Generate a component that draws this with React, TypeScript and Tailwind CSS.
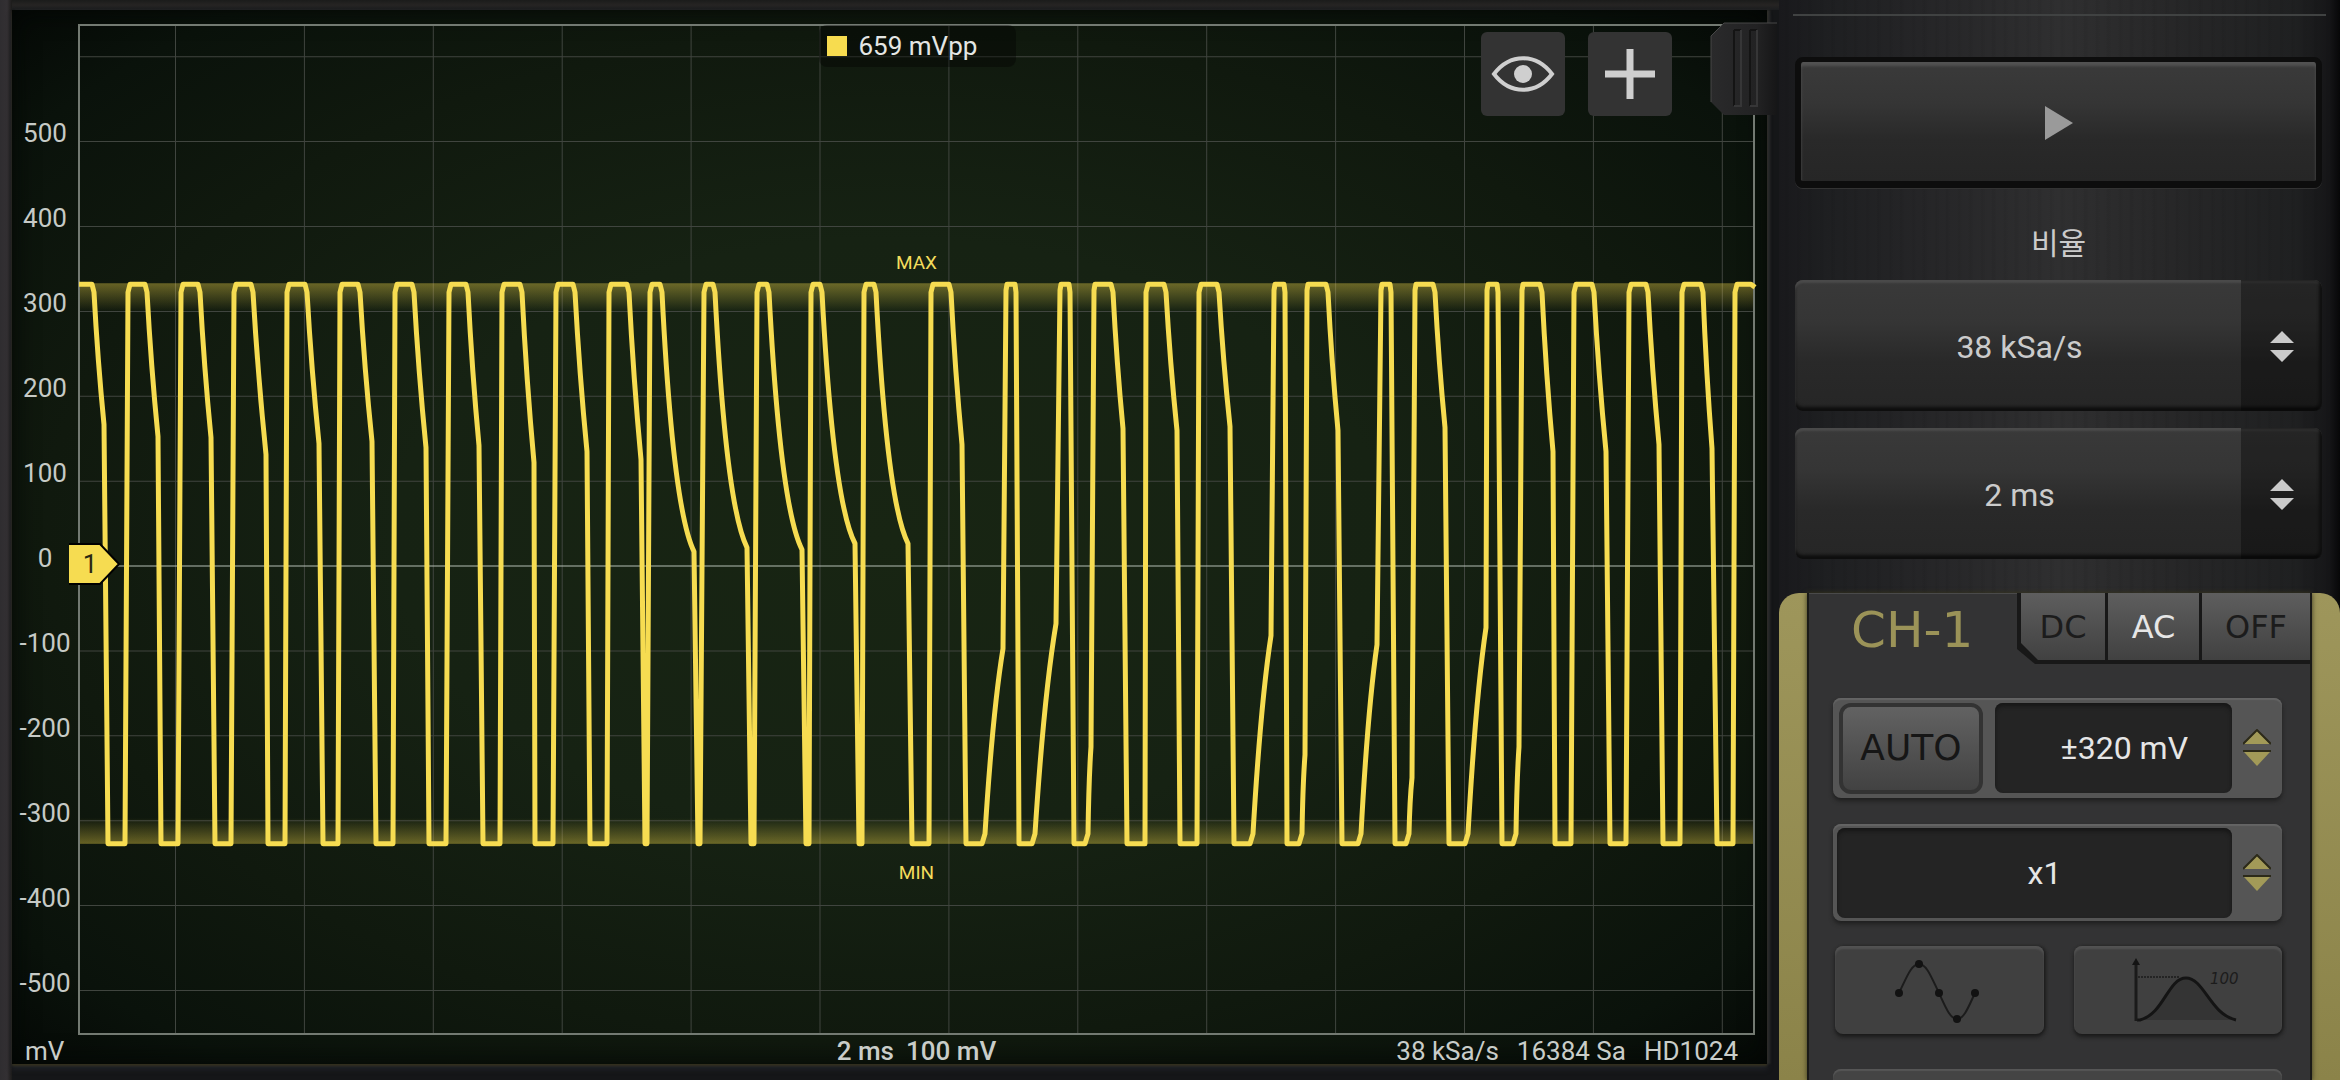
import type { ReactNode } from "react";

const TOP = 284;
const BOTTOM = 843;
const ZERO = 565.5;
const DIVISION = 84.8;

type Pulse = {
  /** x where the trace leaves the lower rail and where it reaches the upper one */
  rise?: [number, number];
  /** bend of a slow rising edge */
  riseKnee?: [number, number];
  /** x where the trace leaves the upper rail and where it reaches the lower one */
  fall?: [number, number];
  /** bend of a slow falling edge */
  fallKnee?: [number, number];
};

const pulses: Pulse[] = [
  { fall: [93, 108], fallKnee: [104, 424] },
  { rise: [125, 129], fall: [146, 161], fallKnee: [158, 436] },
  { rise: [178, 182], fall: [199, 215], fallKnee: [211, 437] },
  { rise: [231, 235], fall: [252, 268], fallKnee: [266, 454] },
  { rise: [285, 288], fall: [306, 323], fallKnee: [319, 443] },
  { rise: [338, 341], fall: [359, 376], fallKnee: [372, 441] },
  { rise: [393, 396], fall: [413, 429], fallKnee: [426, 447] },
  { rise: [446, 450], fall: [467, 483], fallKnee: [479, 445] },
  { rise: [500, 503], fall: [521, 535], fallKnee: [534, 462] },
  { rise: [553, 557], fall: [574, 590], fallKnee: [587, 451] },
  { rise: [607, 610], fall: [628, 645], fallKnee: [641, 459] },
  { rise: [647, 651], fall: [661, 698], fallKnee: [694, 551] },
  { rise: [700, 705], fall: [714, 751], fallKnee: [747, 547] },
  { rise: [754, 758], fall: [768, 806], fallKnee: [802, 549] },
  { rise: [809, 812], fall: [821, 859], fallKnee: [855, 543] },
  { rise: [862, 865], fall: [875, 912], fallKnee: [908, 543] },
  { rise: [929, 932], fall: [950, 966], fallKnee: [962, 444] },
  { rise: [984, 1006], riseKnee: [1003, 648], fall: [1016, 1019] },
  { rise: [1034, 1060], riseKnee: [1056, 623], fall: [1070, 1074] },
  { rise: [1087, 1094], riseKnee: [1091, 746], fall: [1112, 1127], fallKnee: [1123, 428] },
  { rise: [1145, 1147], fall: [1165, 1180], fallKnee: [1177, 430] },
  { rise: [1197, 1200], fall: [1218, 1234], fallKnee: [1230, 426] },
  { rise: [1252, 1274], riseKnee: [1271, 635], fall: [1285, 1287] },
  { rise: [1301, 1307], riseKnee: [1305, 754], fall: [1327, 1342], fallKnee: [1338, 430] },
  { rise: [1360, 1381], riseKnee: [1377, 644], fall: [1391, 1395] },
  { rise: [1408, 1415], riseKnee: [1412, 777], fall: [1434, 1449], fallKnee: [1445, 427] },
  { rise: [1467, 1487], riseKnee: [1486, 627], fall: [1498, 1502] },
  { rise: [1515, 1522], riseKnee: [1519, 746], fall: [1541, 1555], fallKnee: [1553, 451] },
  { rise: [1571, 1575], fall: [1593, 1610], fallKnee: [1606, 451] },
  { rise: [1626, 1630], fall: [1647, 1663], fallKnee: [1659, 444] },
  { rise: [1680, 1683], fall: [1702, 1717], fallKnee: [1712, 448] },
  { rise: [1733, 1736] },
];

function tracePath(): string {
  const d: string[] = [`M79 ${TOP}`];
  for (const p of pulses) {
    if (p.rise) {
      const [x0, x1] = p.rise;
      if (p.riseKnee) {
        const [kx, ky] = p.riseKnee;
        const dx = kx - x0;
        d.push(`L${x0 - 2} ${BOTTOM} L${x0 + 1} ${BOTTOM - 10}`);
        d.push(`Q${x0 + dx * 0.45} ${ky + (BOTTOM - ky) * 0.33} ${kx} ${ky} L${x1} ${TOP + 6}`);
      } else {
        d.push(`L${x0} ${BOTTOM} L${x1 - 1} ${TOP + 8}`);
      }
      d.push(`L${x1 + 1} ${TOP}`);
    }
    if (p.fall) {
      const [x0, x1] = p.fall;
      d.push(`L${x0 - 1} ${TOP}`);
      if (p.fallKnee) {
        const [kx, ky] = p.fallKnee;
        const dx = kx - x0;
        const bend = dx > 20 ? [0.36, 0.84] : [0.42, 0.54];
        d.push(`L${x0 + 1} ${TOP + 8}`);
        d.push(`Q${x0 + dx * bend[0]} ${TOP + (ky - TOP) * bend[1]} ${kx} ${ky}`);
      } else {
        d.push(`L${x0} ${TOP + 8}`);
      }
      d.push(`L${x1} ${BOTTOM}`);
    }
  }
  d.push(`L1751 ${TOP} L1755 ${TOP + 3}`);
  return d.join(" ");
}

const levels = [500, 400, 300, 200, 100, 0, -100, -200, -300, -400, -500];

function Plot() {
  return (
    <svg
      viewBox="78 24 1677 1010"
      preserveAspectRatio="none"
      className="absolute inset-0 h-full w-full overflow-visible"
      aria-hidden="true"
    >
      <defs>
        <linearGradient id="maxBand" x1="0" y1="0" x2="0" y2="1">
          <stop offset="0" stopColor="#f7dc4a" stopOpacity="0.38" />
          <stop offset="1" stopColor="#f7dc4a" stopOpacity="0" />
        </linearGradient>
        <linearGradient id="minBand" x1="0" y1="1" x2="0" y2="0">
          <stop offset="0" stopColor="#f7dc4a" stopOpacity="0.38" />
          <stop offset="1" stopColor="#f7dc4a" stopOpacity="0" />
        </linearGradient>
      </defs>
      <g stroke="#40453f" strokeWidth="1">
        {Array.from({ length: 13 }, (_, i) => 175.5 + i * 128.9).map((x) => (
          <line key={x} x1={x} x2={x} y1="25" y2="1033" />
        ))}
        {[6, ...levels.map((v) => v / 100)]
          .filter((n) => n !== 0)
          .map((n) => (
            <line key={n} x1="79" x2="1754" y1={ZERO - n * DIVISION} y2={ZERO - n * DIVISION} />
          ))}
      </g>
      <rect x="79" y="283" width="1675" height="28" fill="url(#maxBand)" />
      <rect x="79" y="817" width="1675" height="26" fill="url(#minBand)" />
      <line x1="79" x2="1754" y1={ZERO} y2={ZERO} stroke="#b4bdb3" />
      <rect x="79" y="25" width="1675" height="1008" fill="none" stroke="#737a72" strokeWidth="2" />
      <path d={tracePath()} fill="none" stroke="#f6dc51" strokeWidth="5" strokeLinejoin="round" />
    </svg>
  );
}

function ScopeButton({ label, children }: { label: string; children: ReactNode }) {
  return (
    <button
      type="button"
      aria-label={label}
      className="flex h-[84px] w-[84px] items-center justify-center rounded-md bg-[#333333]"
    >
      {children}
    </button>
  );
}

function Scope() {
  return (
    <main className="relative flex min-w-0 flex-1 bg-[linear-gradient(to_right,#2f2d30_0,#333033_7px,#1c1b1a_12px,transparent_12px),linear-gradient(to_bottom,#1b1c1b_0,#262423_5px,#1b1d1f_10px,transparent_10px)] pb-[17px] pl-3 pr-3 pt-[10px]">
      <div className="grid min-w-0 flex-1 grid-cols-[66px_minmax(0,1fr)_12px] grid-rows-[14px_minmax(600px,1fr)_29px] bg-[radial-gradient(ellipse_at_center,#182513_0%,#162213_40%,#10190e_68%,#0a120b_88%,#050906_100%)] shadow-[0_2px_2px_#33301f,0_5px_5px_#22252a,3px_0_2px_#2e2e2c,inset_0_0_26px_#030604]">
        <div className="col-start-1 row-start-2 flex flex-col pb-[10px] pt-[66px]">
          {levels.map((v) => (
            <div
              key={v}
              className="flex flex-1 items-center justify-center text-[26px] leading-none text-[#c6cac6]"
            >
              {v}
            </div>
          ))}
        </div>

        <section aria-label="CH-1" className="relative col-start-2 row-start-2">
          <Plot />

          <div className="absolute left-1/2 top-px ml-[-98px] flex h-[42px] w-[197px] items-center gap-3 rounded-lg bg-black/35 pl-2 text-[26px] leading-none text-[#e4e6e4]">
            <span className="h-5 w-5 bg-[#f7dc4f]" />
            <span>659 mVpp</span>
          </div>

          <div className="absolute right-[83px] top-2 flex gap-[23px]">
            <ScopeButton label="Show">
              <svg width="64" height="38" viewBox="0 0 64 38" aria-hidden="true">
                <path
                  d="M3 19C19-2 45-2 61 19C45 40 19 40 3 19Z"
                  fill="none"
                  stroke="#cfcfcf"
                  strokeWidth="4"
                />
                <circle cx="32" cy="19" r="9" fill="#cfcfcf" />
              </svg>
            </ScopeButton>
            <ScopeButton label="Add">
              <svg width="50" height="50" viewBox="0 0 50 50" aria-hidden="true">
                <path d="M25 0V50M0 25H50" stroke="#cfcfcf" strokeWidth="7" />
              </svg>
            </ScopeButton>
          </div>

          <p className="absolute inset-x-0 top-[23.6%] mt-[-10px] text-center text-[19px] leading-5 text-[#f3dc5c]">
            MAX
          </p>
          <p className="absolute inset-x-0 top-[84%] mt-[-10px] text-center text-[19px] leading-5 text-[#f3dc5c]">
            MIN
          </p>

          <div className="absolute left-[-9px] top-[53.4%] mt-[-21px] h-[42px] w-[52px]">
            <svg width="52" height="42" viewBox="0 0 52 42" className="absolute inset-0" aria-hidden="true">
              <path d="M0 1H31L50 21L31 41H0" fill="#f6dc51" stroke="#000" strokeWidth="2" />
            </svg>
            <span className="relative flex h-full w-[42px] items-center justify-center text-[26px] leading-none text-[#2b2711]">
              1
            </span>
          </div>
        </section>

        <footer className="col-span-3 row-start-3 grid grid-cols-[1fr_auto_1fr] items-center px-[13px] pt-[3px] text-[26px] leading-none text-[#c9cdc9]">
          <span>mV</span>
          <span className="flex gap-3 pl-[54px] font-medium">
            <span>2 ms</span>
            <span>100 mV</span>
          </span>
          <span className="flex justify-end gap-[18px] pr-4">
            <span>38 kSa/s</span>
            <span>16384 Sa</span>
            <span>HD1024</span>
          </span>
        </footer>
      </div>

      <button type="button" aria-label="Drawer" className="absolute right-[2px] top-[22px] h-[94px] w-[67px]">
        <svg width="67" height="94" viewBox="0 0 67 94" aria-hidden="true">
          <defs>
            <linearGradient id="tab" x1="0" x2="1" y1="0" y2="0">
              <stop offset="0" stopColor="#2a2a2b" />
              <stop offset="0.7" stopColor="#222223" />
              <stop offset="1" stopColor="#161617" />
            </linearGradient>
          </defs>
          <path d="M14 1H67V93H14L1 80V14Z" fill="url(#tab)" />
          <path d="M67 1H14L1 14V80" fill="none" stroke="#464747" strokeWidth="1" />
          <path d="M24 8H31M40 8H47M24 8V84M40 8V84" stroke="#141414" strokeWidth="2" fill="none" />
          <path d="M31 8V84H24M47 8V84H40" stroke="#363637" strokeWidth="2" fill="none" />
        </svg>
      </button>
    </main>
  );
}

function LightArrows() {
  return (
    <svg width="24" height="31" viewBox="0 0 24 31" aria-hidden="true">
      <path d="M12 0L24 12H0ZM0 19H24L12 31Z" fill="#cacaca" />
    </svg>
  );
}

function GoldArrows() {
  return (
    <svg width="28" height="38" viewBox="0 0 28 38" aria-hidden="true">
      <path d="M14 1L27 15H1Z" fill="#a29a58" />
      <path d="M0 15L14 1L28 15" fill="none" stroke="#2c2a19" strokeWidth="2" />
      <path d="M1 23H27L14 37Z" fill="#a29a58" />
      <path d="M0 22H28" stroke="#2c2a19" strokeWidth="2" />
    </svg>
  );
}

function RateSelect({ id, label, value }: { id: string; label?: string; value: string }) {
  return (
    <div className="relative h-[131px] overflow-hidden rounded-lg bg-[linear-gradient(to_bottom,#393939_0%,#353535_32%,#292929_62%,#262626_100%)] shadow-[inset_0_3px_2px_#4a4a4a,inset_0_-4px_3px_#0e0e0e]">
      <select
        id={id}
        aria-label={label}
        className="h-full w-full appearance-none bg-transparent pr-[78px] pt-[3px] text-center text-[32px] text-[#cbcbcb]"
        defaultValue={value}
      >
        <option>{value}</option>
      </select>
      <div className="pointer-events-none absolute inset-y-0 right-0 flex w-[81px] items-center justify-center bg-black/35 pt-[2px] shadow-[inset_-3px_0_3px_#101010]">
        <LightArrows />
      </div>
    </div>
  );
}

const techFont = "font-['DejaVu_Sans',sans-serif] font-normal";

function CouplingTabs() {
  const face = "flex items-center justify-center bg-[linear-gradient(to_bottom,#5e5e5e,#414141)] text-[32px] leading-none";
  return (
    <div
      role="group"
      aria-label="Coupling"
      className="flex h-[71px] w-[293px] gap-[3px] bg-[#181818] pb-[4px] pl-[4px] [clip-path:polygon(0_0,100%_0,100%_100%,18px_100%,0_56px)]"
    >
      <button
        type="button"
        aria-pressed="false"
        className={`${face} ${techFont} w-[84px] text-[#1c1c1c] [clip-path:polygon(0_0,100%_0,100%_100%,17px_100%,0_50px)]`}
      >
        DC
      </button>
      <button type="button" aria-pressed="true" className={`${face} ${techFont} w-[91px] text-[#e6e6e6]`}>
        AC
      </button>
      <button type="button" aria-pressed="false" className={`${face} ${techFont} flex-1 text-[#1c1c1c]`}>
        OFF
      </button>
    </div>
  );
}

const frame =
  "flex rounded-lg bg-[#555555] shadow-[inset_0_2px_1px_#646464,0_3px_4px_#1f1f1f]";
const well =
  "h-[90px] min-w-0 flex-1 appearance-none rounded-lg bg-[#242424] text-[32px] text-[#e6e6e6] shadow-[inset_0_3px_4px_#161616]";
const key =
  "flex h-[88px] flex-1 items-center justify-center rounded-lg bg-[#404040] shadow-[inset_0_3px_2px_#525252,0_3px_4px_#1a1a1a,2px_0_3px_#232323]";

function ChannelPanel() {
  return (
    <section
      aria-labelledby="channel"
      className="mt-[34px] flex flex-1 rounded-t-[20px] bg-[linear-gradient(to_bottom,#9e965b,#8b8349)] px-7"
    >
      <div className="flex min-w-0 flex-1 flex-col border-x-2 border-[#1a1a17] bg-[#333334] shadow-[0_0_5px_#3a371e,inset_0_1px_0_#4a4a4a]">
        <div className="flex items-start justify-between">
          <h2
            id="channel"
            className={`${techFont} pl-[42px] pt-3 text-[50px] leading-[50px] text-[#9b9358]`}
          >
            CH-1
          </h2>
          <CouplingTabs />
        </div>

        <div className="flex flex-1 flex-col pl-6 pr-7 pt-[34px]">
          <div className={`${frame} h-[100px] items-center pl-[6px]`}>
            <button
              type="button"
              className={`${techFont} mr-3 h-[91px] w-[144px] rounded-xl border-[4px] border-[#333333] bg-[linear-gradient(to_bottom,#626262,#424242)] text-[36px] leading-none text-[#161616]`}
            >
              AUTO
            </button>
            <select aria-label="Range" className={`${well} pr-11 [text-align-last:right]`} defaultValue="±320 mV">
              <option>±320 mV</option>
            </select>
            <span className="flex w-[50px] items-center justify-center">
              <GoldArrows />
            </span>
          </div>

          <div className={`${frame} mt-[26px] h-[97px] items-center pl-1`}>
            <select aria-label="Probe" className={`${well} pl-5 [text-align-last:center]`} defaultValue="x1">
              <option>x1</option>
            </select>
            <span className="flex w-[50px] items-center justify-center">
              <GoldArrows />
            </span>
          </div>

          <div className="mt-[25px] flex gap-[30px] pl-[2px]">
            <button type="button" aria-label="Interpolation" className={key}>
              <svg width="86" height="66" viewBox="0 0 86 66" className="-ml-1 mt-1" aria-hidden="true">
                <path
                  d="M5 34C12 20 17 5 25 5C33 5 38 20 45 34C51 47 56 60 63 60C70 60 74 49 81 34"
                  fill="none"
                  stroke="#1c1c1c"
                  strokeWidth="2"
                />
                {[
                  [5, 34],
                  [25, 5],
                  [45, 34],
                  [63, 60],
                  [81, 34],
                ].map(([x, y]) => (
                  <circle key={x} cx={x} cy={y} r="4" fill="#121212" />
                ))}
              </svg>
            </button>
            <button type="button" aria-label="Measure" className={key}>
              <svg width="108" height="64" viewBox="0 0 108 64" className="ml-4" aria-hidden="true">
                <path d="M8 62C32 56 36 20 54 20C72 20 78 56 104 62Z" fill="#343434" />
                <path d="M5 62H8C32 56 36 20 54 20C72 20 78 56 104 62" fill="none" stroke="#141414" strokeWidth="3" />
                <path d="M4 63V5" stroke="#1a1a1a" strokeWidth="3" />
                <path d="M4 0L8 7H0Z" fill="#141414" />
                <path d="M6 19H48" stroke="#242424" strokeWidth="2" strokeDasharray="2 1" />
                <text
                  x="78"
                  y="26"
                  fontSize="15"
                  fontStyle="italic"
                  fontFamily="DejaVu Sans, sans-serif"
                  fill="#1c1c1c"
                >
                  100
                </text>
              </svg>
            </button>
          </div>

          <div className="mt-[35px] min-h-3 flex-1 rounded-t-lg bg-[#444444] shadow-[inset_0_2px_1px_#565656]" />
        </div>
      </div>
    </section>
  );
}

function Sidebar() {
  return (
    <aside className="flex w-[561px] shrink-0 flex-col bg-[repeating-linear-gradient(to_right,transparent_0,transparent_5px,rgba(0,0,0,0.06)_7px,transparent_11px,transparent_17px,rgba(0,0,0,0.05)_19px,transparent_23px),linear-gradient(to_right,#19191c_0%,#1e1f21_8%,#252527_25%,#2f2f30_50%,#272728_70%,#1f2021_92%,#161618_98%,#070708_100%)]">
      <div className="mx-[14px] mt-[14px] h-[2px] bg-[#404242]" />
      <div className="ml-4 mr-[18px] mt-[41px] flex flex-col">
        <button
          type="button"
          aria-label="Run"
          className="flex h-[131px] items-center justify-center rounded-lg border-x-[6px] border-b-[7px] border-t-[5px] border-[#0d0d0d] bg-[linear-gradient(to_bottom,#3a3a3a_0%,#353535_35%,#292929_65%,#262626_100%)] pt-[3px] shadow-[inset_0_4px_3px_#525252,0_1px_0_#333333]"
        >
          <svg width="28" height="34" viewBox="0 0 28 34" aria-hidden="true">
            <path d="M0 0L28 17L0 34Z" fill="#9a9a9a" />
          </svg>
        </button>
        <label
          htmlFor="rate"
          className="flex h-[92px] items-center justify-center pt-[19px] font-['Roboto','Noto_Sans_CJK_KR',sans-serif] text-[30px] leading-none text-[#cbcbcb]"
        >
          비율
        </label>
        <div className="flex flex-col gap-[17px]">
          <RateSelect id="rate" value="38 kSa/s" />
          <RateSelect id="timebase" label="Timebase" value="2 ms" />
        </div>
      </div>
      <ChannelPanel />
    </aside>
  );
}

export default function App() {
  return (
    <div className="flex min-h-screen w-full bg-[#151618] font-['Roboto','Noto_Sans_CJK_KR',sans-serif]">
      <Scope />
      <Sidebar />
    </div>
  );
}
